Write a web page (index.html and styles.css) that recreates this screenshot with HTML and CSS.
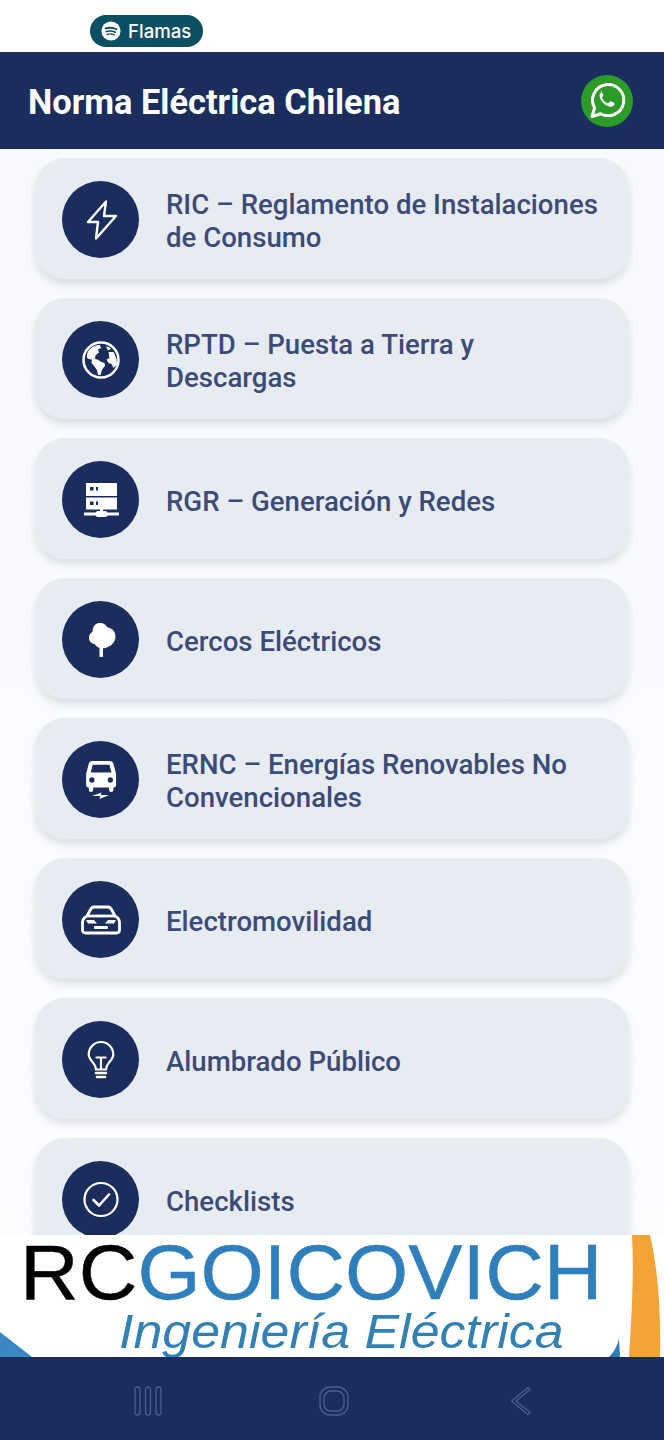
FILE: index.html
```html
<!DOCTYPE html>
<html lang="es">
<head>
<meta charset="utf-8">
<title>Norma Eléctrica Chilena</title>
<link rel="stylesheet" href="styles.css">
</head>
<body>
<div class="app">
  <div class="status">
    <div class="pill">
      <svg class="pill-icon" viewBox="0 0 24 24"><circle cx="12" cy="12" r="11.500" fill="#fff"/><g fill="none" stroke="#0b4f63" stroke-linecap="round"><path d="M5.500 8.800c4.500-1.200 9-.9 13 1.100" stroke-width="2.200"/><path d="M6.300 12.600c3.800-1 7.600-.7 11 .9" stroke-width="1.900"/><path d="M7 16c3.200-.8 6.400-.6 9.200.8" stroke-width="1.600"/></g></svg>
      <span>Flamas</span>
    </div>
  </div>
  <header class="topbar">
    <h1>Norma Eléctrica Chilena</h1>
    <div class="wa">
      <svg viewBox="0 0 52 52" width="52" height="52"><path d="M11 41.500l2.600-8.600a15.600 15.600 0 1 1 6 5.900z" fill="none" stroke="#fff" stroke-width="3" stroke-linejoin="round"/><path d="M20.600 17.500c-.7 0-1.900.9-2 2.900-.1 2.400 1.300 4.900 3.300 7.100 2.300 2.500 5 4 7.400 4.300 2 .2 3.700-1 4.100-2.300.2-.7.2-1.300.1-1.500l-3.700-1.800c-.4-.1-.7 0-.9.300l-1.300 1.600c-.3.300-.5.300-.9.100-2.800-1.200-4.500-3-5.700-5.200-.2-.4-.1-.6.1-.8l1-1.300c.2-.3.2-.5.1-.8l-1.500-3.600c-.2-.5-.6-.9-1.100-.9z" fill="#fff"/></svg>
    </div>
  </header>
  <main class="list">
    <a class="card">
      <span class="badge"><svg viewBox="0 0 40 40" class="ico"><path d="M25 1.500 7 22h10l-2 16.500L35 16H23z" fill="none" stroke="#fff" stroke-width="2.400" stroke-linejoin="round"/></svg></span>
      <span class="label">RIC – Reglamento de Instalaciones de Consumo</span>
    </a>
    <a class="card">
      <span class="badge"><svg viewBox="0 0 40 40" class="ico"><circle cx="20" cy="20" r="17.500" fill="#1b2d5c" stroke="#fff" stroke-width="2.500"/><path d="M11 7.500c3-2 5-2.500 8-2.500l1 3-3 1.500 1 3-4 3.500.5 2.500-5 1-3.500-1.500C5.500 13 7.500 10 11 7.500zM11 18.500l5.500 1 4 2.500 3 1 .5 3-3 3.500-1.500 5.500h-2.500l-1-5-2.500-3.500-3-3.500zM27.500 12l5 0 3 6.500.5 6-3.500 3.500-2-4-3-1-2-3.500 3-1.500zM25 6.500l3 .5 2 2-3 1.500z" fill="#fff"/></svg></span>
      <span class="label">RPTD – Puesta a Tierra y Descargas</span>
    </a>
    <a class="card">
      <span class="badge"><svg viewBox="0 0 40 40" class="ico"><path d="M5 3h31v13H5zM5 17.500h31v12H5z" fill="#fff"/><path d="M19 29h3v3.500h-3z" fill="#fff"/><path d="M3 32.500h35v3H3z" fill="#fff"/><rect x="14.500" y="31" width="12" height="6" rx="2.500" fill="#fff"/><g fill="#1b2d5c"><rect x="9" y="7" width="3.500" height="3.500"/><rect x="15" y="7" width="2" height="3.500"/><rect x="9" y="21.500" width="3.500" height="3.500"/><rect x="15" y="21.500" width="2" height="3.500"/></g></svg></span>
      <span class="label">RGR – Generación y Redes</span>
    </a>
    <a class="card">
      <span class="badge"><svg viewBox="0 0 40 40" class="ico"><path d="M18.500 27h3.500v10h-3.500z" fill="#fff"/><path d="M18 3c4-.5 7 1.500 8.500 4.500 4.500.5 8 4 8 9 0 5.500-4.500 10-10 11.500-4.500 1-9-.5-11-4-3.500-.5-6-3.500-5.500-7 .2-2.500 1.500-4 3.500-5C11.500 7 14 3.500 18 3z" fill="#fff"/></svg></span>
      <span class="label">Cercos Eléctricos</span>
    </a>
    <a class="card">
      <span class="badge"><svg viewBox="0 0 40 40" class="ico"><g transform="translate(2.500 0) scale(.88 .93)"><path fill-rule="evenodd" d="M10 1h20c2 0 3.500 1.200 4 3l2.500 9c.5 1 .5 2 .5 3v11c0 1.500-1 2.500-2.500 2.500H34V32a2.500 2.500 0 0 1-5 0v-2.500H11V32a2.500 2.500 0 0 1-5 0v-2.500H5.500C4 29.500 3 28.500 3 27V16c0-1 0-2 .5-3L6 4c.5-1.800 2-3 4-3zM10.500 5 8.200 13.500h23.600L29.500 5zM9.500 18.500a3 3 0 1 0 0 6 3 3 0 0 0 0-6zM30.500 18.500a3 3 0 1 0 0 6 3 3 0 0 0 0-6z" fill="#fff"/></g><path d="M11 36l9.500-3.500-1 2.500H28l-9.500 4 1-3z" fill="#fff"/></svg></span>
      <span class="label">ERNC – Energías Renovables No Convencionales</span>
    </a>
    <a class="card">
      <span class="badge"><svg viewBox="0 0 40 40" class="ico"><g fill="none" stroke="#fff" stroke-width="2.800" stroke-linejoin="round"><path d="M1.500 30v-7.500c0-3 1.500-5 4.500-6.500l3.500-6.500C10.500 7.500 12 7 13.500 7h13c1.500 0 3 .5 4 2.500l3.500 6.500c3 1.500 4.500 3.500 4.500 6.500V30c0 2-1 3-3 3H4.500c-2 0-3-1-3-3z"/><path d="M6 16h28"/></g><g fill="#fff"><path d="M5 20h8l3 3.500H7zM35 20h-8l-3 3.500h9z"/><rect x="13" y="26" width="14" height="3" rx="1"/></g></svg></span>
      <span class="label">Electromovilidad</span>
    </a>
    <a class="card">
      <span class="badge"><svg viewBox="0 0 40 40" class="ico"><g fill="none" stroke="#fff" stroke-width="2.200" stroke-linecap="round"><path d="M15 29.500c0-3.500-1.500-5-3.500-7.500-2-2.300-3.800-4.500-3.800-7.500A12.300 12.300 0 0 1 20 2a12.300 12.300 0 0 1 12.300 12.500c0 3-1.800 5.200-3.800 7.500-2 2.500-3.500 4-3.500 7.500z"/><path d="M20 29V19M15.500 17.500h9"/><path d="M15 33h10M16 37h8" stroke-width="2.600"/></g></svg></span>
      <span class="label">Alumbrado Público</span>
    </a>
    <a class="card">
      <span class="badge"><svg viewBox="0 0 40 40" class="ico"><circle cx="20" cy="19.500" r="16.500" fill="none" stroke="#fff" stroke-width="2.200"/><path d="M12.500 20l5.500 5.500 10-11" fill="none" stroke="#fff" stroke-width="2.600" stroke-linecap="round" stroke-linejoin="round"/></svg></span>
      <span class="label">Checklists</span>
    </a>
  </main>
  <section class="banner">
    <svg class="banner-art" viewBox="0 0 664 122" width="664" height="122"><path d="M0 97 32 122H0z" fill="#3b87c4"/><path d="M609 122c5-5 9-12 10-19l1 19z" fill="#2f7db8"/><path d="M632 0h18c7 30 11 70 10 122h-31c3-45 5-85 3-122z" fill="#f2a436"/></svg>
    <div class="logo"><span class="rc">RC</span><span class="go">GOICOVICH</span></div>
    <div class="sub">Ingeniería Eléctrica</div>
  </section>
  <nav class="navbar">
    <svg class="nav-ico" viewBox="0 0 30 30" width="30" height="30"><g fill="none" stroke="#4a5f8f" stroke-width="1.300"><rect x="2" y="1" width="5" height="28" rx="2.500"/><rect x="12.500" y="1" width="5" height="28" rx="2.500"/><rect x="23" y="1" width="5" height="28" rx="2.500"/></g></svg>
    <svg class="nav-ico" viewBox="0 0 30 30" width="30" height="30"><g fill="none" stroke="#4a5f8f" stroke-width="1.300"><rect x="1" y="1" width="28" height="28" rx="10"/><rect x="5" y="5" width="20" height="20" rx="7"/></g></svg>
    <svg class="nav-ico" viewBox="0 0 30 30" width="30" height="30"><path d="M23 1.500 6.500 15 23 28.500l2-2L11 15 25 3.500z" fill="none" stroke="#4a5f8f" stroke-width="1.300" stroke-linejoin="round"/></svg>
  </nav>
</div>
</body>
</html>
```
FILE: styles.css
```css
* { box-sizing: border-box; }
html, body { margin: 0; padding: 0; }
body { font-family: Roboto, "Liberation Sans", sans-serif; background: #fff; }
.app { width: 664px; height: 1440px; display: flex; flex-direction: column; overflow: hidden; }
.status { height: 52px; flex: none; padding: 15px 0 0 90px; background: #fff; }
.pill { width: 113px; height: 32px; border-radius: 16px; background: #0b4f63; color: #fff; display: flex; align-items: center; gap: 7px; padding-left: 11px; font: 500 18.6px Inter, Roboto, sans-serif; }
.pill-icon { width: 20px; height: 20px; flex: none; }
.topbar { height: 97px; flex: none; background: #1b2d5c; display: flex; align-items: center; justify-content: space-between; padding: 0 31px 0 28px; }
.topbar h1 { margin: 0; padding-top: 5px; color: #fff; font: 700 34.4px/1.2 Roboto, sans-serif; }
.wa { width: 52px; height: 52px; border-radius: 50%; background: #2d9b27; }
.wa svg { display: block; }
.list { flex: 1; min-height: 0; overflow: hidden; padding: 9px 35px 0; display: flex; flex-direction: column; gap: 19px; background: linear-gradient(#f7f9fd, #fcfdff); }
.card { flex: none; height: 121px; display: flex; align-items: center; gap: 27px; padding: 2px 28px 0 27px; background: #e7ebf2; border-radius: 30px; box-shadow: 0 5px 9px rgba(60, 70, 90, .16), 0 -2px 6px rgba(255, 255, 255, .8); }
.badge { width: 77px; height: 77px; flex: none; border-radius: 50%; background: #1b2d5c; display: flex; align-items: center; justify-content: center; }
.ico { width: 40px; height: 40px; display: block; }
.label { padding-top: 3px; color: #3c4b78; font: 500 27.6px/33px Roboto, sans-serif; }
.banner { height: 122px; flex: none; position: relative; background: #fff; }
.banner-art { position: absolute; left: 0; top: 0; }
.logo { position: relative; margin: 4px 0 0 20px; font: 400 78px/66px "Liberation Sans", sans-serif; white-space: nowrap; transform: scaleX(1.042); transform-origin: left center; -webkit-text-stroke: .4px currentColor; }
.rc { color: #000; }
.go { color: #2f7fbd; }
.sub { position: relative; height: 51px; overflow: hidden; margin: 1px 0 0 119px; color: #3380b5; font: italic 400 49px/50px "Liberation Sans", sans-serif; white-space: nowrap; transform: scaleX(1.06); transform-origin: left center; }
.navbar { height: 83px; flex: none; background: #1b2d5c; display: flex; align-items: flex-start; justify-content: center; gap: 156px; padding: 29px 0 0 4px; }
.nav-ico { display: block; flex: none; }
```
